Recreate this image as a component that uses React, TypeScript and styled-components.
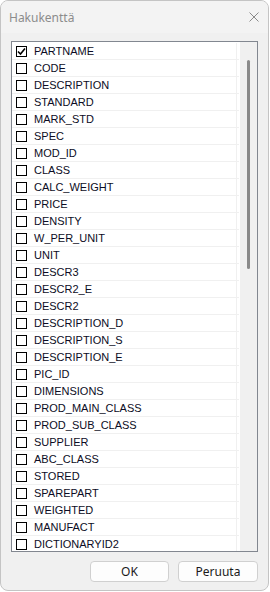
import styled, { createGlobalStyle } from "styled-components";

const GlobalStyle = createGlobalStyle`
  html, body {
    margin: 0;
    padding: 0;
    background: #ffffff;
  }
  * {
    box-sizing: border-box;
  }
`;

const FIELDS = [
  "PARTNAME",
  "CODE",
  "DESCRIPTION",
  "STANDARD",
  "MARK_STD",
  "SPEC",
  "MOD_ID",
  "CLASS",
  "CALC_WEIGHT",
  "PRICE",
  "DENSITY",
  "W_PER_UNIT",
  "UNIT",
  "DESCR3",
  "DESCR2_E",
  "DESCR2",
  "DESCRIPTION_D",
  "DESCRIPTION_S",
  "DESCRIPTION_E",
  "PIC_ID",
  "DIMENSIONS",
  "PROD_MAIN_CLASS",
  "PROD_SUB_CLASS",
  "SUPPLIER",
  "ABC_CLASS",
  "STORED",
  "SPAREPART",
  "WEIGHTED",
  "MANUFACT",
  "DICTIONARYID2",
];

const DialogWindow = styled.div`
  width: 269px;
  height: 591px;
  background: #f0f0f0;
  border: 1px solid #c4c4c4;
  border-radius: 8px;
  display: flex;
  flex-direction: column;
  overflow: hidden;
`;

const TitleBar = styled.div`
  height: 32px;
  display: flex;
  align-items: center;
  justify-content: space-between;
  padding: 0 9px 0 8px;
  background: #f3f3f3;
`;

const Title = styled.span`
  font-family: "Noto Sans", "Open Sans", sans-serif;
  font-size: 12px;
  color: #8c8c8c;
`;

const CloseIcon = styled.svg`
  width: 10px;
  height: 10px;
  display: block;
`;

const DialogBody = styled.div`
  flex: 1;
  display: flex;
  flex-direction: column;
  padding: 8px 10px 0 10px;
`;

const ListBox = styled.div`
  height: 511px;
  border: 1px solid #828790;
  background: #ffffff;
  display: flex;
  overflow: hidden;
`;

const Rows = styled.div`
  flex: 1;
  display: flex;
  flex-direction: column;
  padding-top: 1px;
`;

const Row = styled.div`
  height: 17px;
  flex: none;
  display: flex;
  align-items: center;
  border-bottom: 1px solid #f0f0f0;
  padding-left: 4px;
`;

const Cell = styled.div`
  width: 221px;
  height: 100%;
  display: flex;
  align-items: center;
  border-right: 1px solid #f0f0f0;
`;

const CheckBox = styled.span`
  width: 11px;
  height: 11px;
  border: 1px solid #000000;
  background: #ffffff;
  display: flex;
  align-items: center;
  justify-content: center;
  flex: none;
`;

const Label = styled.span`
  margin-left: 7px;
  font-family: "Liberation Sans", Arial, sans-serif;
  font-size: 11px;
  color: #0c0c24;
  white-space: nowrap;
`;

const ScrollBar = styled.div`
  width: 17px;
  flex: none;
  background: #f0f0f0;
  display: flex;
  justify-content: center;
  padding-top: 18px;
  margin-left: 1px;
`;

const Thumb = styled.div`
  width: 3px;
  height: 209px;
  background: #8a8a8a;
  border-radius: 1.5px;
`;

const ButtonRow = styled.div`
  display: flex;
  justify-content: flex-end;
  gap: 9px;
  padding-top: 9px;
`;

const Button = styled.button<{ $w: number }>`
  width: ${(p) => p.$w}px;
  height: 21px;
  background: #fdfdfd;
  border: 1px solid #d0d0d0;
  border-radius: 4px;
  font-family: "Noto Sans", "Open Sans", sans-serif;
  font-size: 12px;
  color: #1a1a1a;
  padding: 0;
  display: flex;
  align-items: center;
  justify-content: center;
`;

const Check = () => (
  <svg width="9" height="9" viewBox="0 0 9 9">
    <path d="M1 4.5 L3.5 7 L8 1.5" fill="none" stroke="#000" strokeWidth="1.6" />
  </svg>
);

export default function App() {
  return (
    <>
      <GlobalStyle />
      <DialogWindow>
        <TitleBar>
          <Title>Hakukenttä</Title>
          <CloseIcon viewBox="0 0 10 10">
            <path d="M0.5 0.5 L9.5 9.5 M9.5 0.5 L0.5 9.5" stroke="#8a8a8a" strokeWidth="1" />
          </CloseIcon>
        </TitleBar>
        <DialogBody>
          <ListBox>
            <Rows>
              {FIELDS.map((f, i) => (
                <Row key={f}>
                  <Cell>
                    <CheckBox>{i === 0 && <Check />}</CheckBox>
                    <Label>{f}</Label>
                  </Cell>
                </Row>
              ))}
            </Rows>
            <ScrollBar>
              <Thumb />
            </ScrollBar>
          </ListBox>
          <ButtonRow>
            <Button $w={79}>OK</Button>
            <Button $w={80}>Peruuta</Button>
          </ButtonRow>
        </DialogBody>
      </DialogWindow>
    </>
  );
}
